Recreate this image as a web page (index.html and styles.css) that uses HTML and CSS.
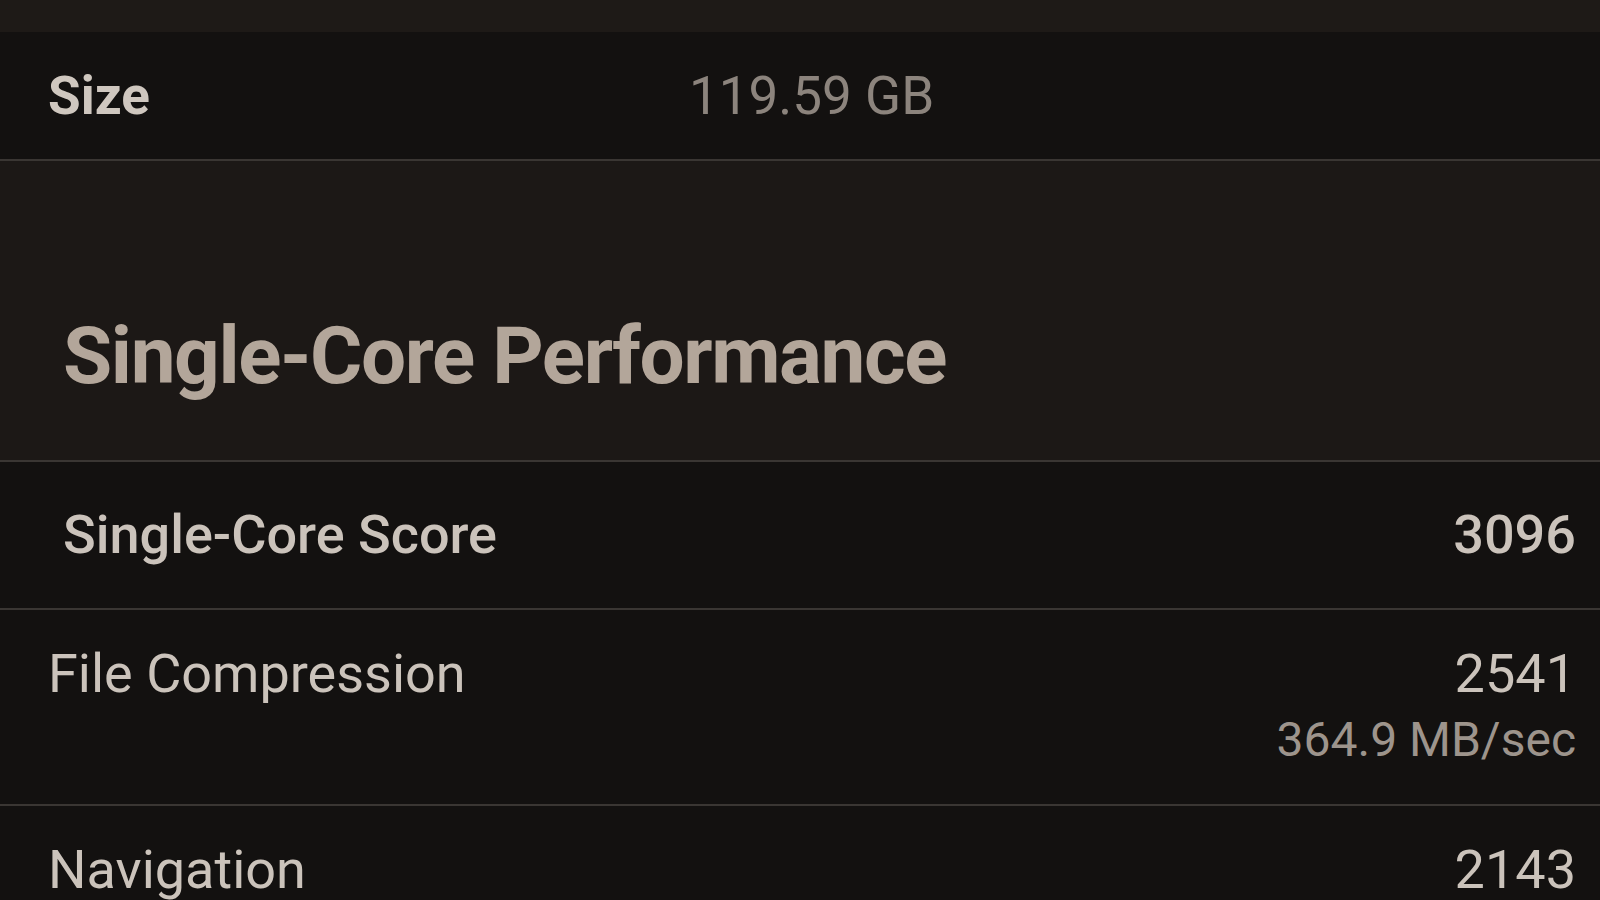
FILE: index.html
```html
<!DOCTYPE html>
<html lang="en">
<head>
    <meta charset="UTF-8">
    <meta name="viewport" content="width=device-width, initial-scale=1.0">
    <title>Geekbench Result</title>
    <link rel="stylesheet" href="styles.css">
</head>
<body>
    <div class="top-bar"></div>

    <div class="info-row">
        <div class="info-label">Size</div>
        <div class="info-value">119.59 GB</div>
    </div>

    <div class="section-header">
        <h2>Single-Core Performance</h2>
    </div>

    <div class="score-row">
        <div class="score-label">Single-Core Score</div>
        <div class="score-value">3096</div>
    </div>

    <div class="bench-row">
        <div class="bench-name">File Compression</div>
        <div class="bench-result">
            <div class="bench-score">2541</div>
            <div class="bench-rate">364.9 MB/sec</div>
        </div>
    </div>

    <div class="bench-row">
        <div class="bench-name">Navigation</div>
        <div class="bench-result">
            <div class="bench-score">2143</div>
        </div>
    </div>
</body>
</html>
```

FILE: styles.css
```css
body {
    margin: 0;
    padding: 0;
    background: #131110;
    font-family: Roboto, "Noto Sans", sans-serif;
    color: #cbc3bb;
    height: 900px;
    overflow: hidden;
}

.top-bar {
    height: 32px;
    background: #1e1a17;
}

.info-row {
    display: grid;
    grid-template-columns: 641px 1fr;
    align-items: center;
    height: 127px;
    padding: 0 24px 0 48px;
    background: #131110;
    border-bottom: 2px solid #3a3633;
    font-size: 53px;
    line-height: 64px;
}

.info-label {
    font-weight: 700;
    color: #cfc7bf;
}

.info-value {
    color: #8c847d;
}

.section-header {
    background: #1c1816;
    padding: 147px 24px 56px 63px;
    border-bottom: 2px solid #3a3633;
}

.section-header h2 {
    margin: 0;
    font-size: 80px;
    line-height: 96px;
    font-weight: 700;
    letter-spacing: -1.4px;
    color: #b3a69a;
}

.score-row {
    display: flex;
    justify-content: space-between;
    align-items: center;
    height: 146px;
    padding: 0 24px 0 63px;
    border-bottom: 2px solid #3a3633;
    font-size: 54px;
    line-height: 64px;
    font-weight: 500;
    color: #cbc3bb;
}

.bench-row {
    display: flex;
    justify-content: space-between;
    align-items: flex-start;
    padding: 32px 24px 36px 48px;
    border-bottom: 2px solid #3a3633;
    font-size: 54px;
    line-height: 64px;
}

.bench-result {
    text-align: right;
}

.bench-rate {
    margin-top: 6px;
    font-size: 48px;
    line-height: 56px;
    color: #9d948c;
}
```
